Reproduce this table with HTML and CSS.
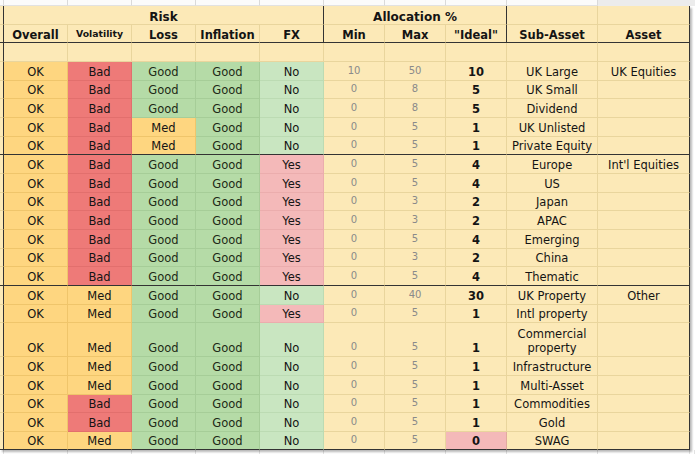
FILE: index.html
```html
<!DOCTYPE html>
<html>
<head>
<meta charset="utf-8">
<link rel="stylesheet" href="styles.css">
</head>
<body>
<div class="top">
  <i></i><i></i><i></i><i></i><i></i><i></i><i></i><i></i><i></i><i></i><i class="shade"></i><i class="shade"></i>
</div>
<div class="tbl">
  <div class="row h1">
    <i class="c0"></i>
    <span class="grp dr">Risk</span>
    <span class="grp3 dr">Allocation %</span>
    <span></span>
    <span></span>
  </div>
  <div class="row h2">
    <i class="c0"></i>
    <span>Overall</span>
    <span class="small">Volatility</span>
    <span>Loss</span>
    <span>Inflation</span>
    <span class="dr">FX</span>
    <span>Min</span>
    <span>Max</span>
    <span class="dr">"Ideal"</span>
    <span>Sub-Asset</span>
    <span>Asset</span>
  </div>
  <div class="row h3">
    <i class="c0"></i><span></span><span></span><span></span><span></span><span></span><span></span><span></span><span></span><span></span><span></span>
  </div>

  <div class="row"><i class="c0"></i><span class="ok">OK</span><span class="bad">Bad</span><span class="good">Good</span><span class="good">Good</span><span class="no">No</span><span class="mn">10</span><span class="mn">50</span><span class="id">10</span><span>UK Large</span><span>UK Equities</span></div>
  <div class="row"><i class="c0"></i><span class="ok">OK</span><span class="bad">Bad</span><span class="good">Good</span><span class="good">Good</span><span class="no">No</span><span class="mn">0</span><span class="mn">8</span><span class="id">5</span><span>UK Small</span><span></span></div>
  <div class="row"><i class="c0"></i><span class="ok">OK</span><span class="bad">Bad</span><span class="good">Good</span><span class="good">Good</span><span class="no">No</span><span class="mn">0</span><span class="mn">8</span><span class="id">5</span><span>Dividend</span><span></span></div>
  <div class="row"><i class="c0"></i><span class="ok">OK</span><span class="bad">Bad</span><span class="med">Med</span><span class="good">Good</span><span class="no">No</span><span class="mn">0</span><span class="mn">5</span><span class="id">1</span><span>UK Unlisted</span><span></span></div>
  <div class="row sep"><i class="c0"></i><span class="ok">OK</span><span class="bad">Bad</span><span class="med">Med</span><span class="good">Good</span><span class="no">No</span><span class="mn">0</span><span class="mn">5</span><span class="id">1</span><span>Private Equity</span><span></span></div>

  <div class="row"><i class="c0"></i><span class="ok">OK</span><span class="bad">Bad</span><span class="good">Good</span><span class="good">Good</span><span class="yes">Yes</span><span class="mn">0</span><span class="mn">5</span><span class="id">4</span><span>Europe</span><span>Int'l Equities</span></div>
  <div class="row"><i class="c0"></i><span class="ok">OK</span><span class="bad">Bad</span><span class="good">Good</span><span class="good">Good</span><span class="yes">Yes</span><span class="mn">0</span><span class="mn">5</span><span class="id">4</span><span>US</span><span></span></div>
  <div class="row"><i class="c0"></i><span class="ok">OK</span><span class="bad">Bad</span><span class="good">Good</span><span class="good">Good</span><span class="yes">Yes</span><span class="mn">0</span><span class="mn">3</span><span class="id">2</span><span>Japan</span><span></span></div>
  <div class="row"><i class="c0"></i><span class="ok">OK</span><span class="bad">Bad</span><span class="good">Good</span><span class="good">Good</span><span class="yes">Yes</span><span class="mn">0</span><span class="mn">3</span><span class="id">2</span><span>APAC</span><span></span></div>
  <div class="row"><i class="c0"></i><span class="ok">OK</span><span class="bad">Bad</span><span class="good">Good</span><span class="good">Good</span><span class="yes">Yes</span><span class="mn">0</span><span class="mn">5</span><span class="id">4</span><span>Emerging</span><span></span></div>
  <div class="row"><i class="c0"></i><span class="ok">OK</span><span class="bad">Bad</span><span class="good">Good</span><span class="good">Good</span><span class="yes">Yes</span><span class="mn">0</span><span class="mn">3</span><span class="id">2</span><span>China</span><span></span></div>
  <div class="row sep"><i class="c0"></i><span class="ok">OK</span><span class="bad">Bad</span><span class="good">Good</span><span class="good">Good</span><span class="yes">Yes</span><span class="mn">0</span><span class="mn">5</span><span class="id">4</span><span>Thematic</span><span></span></div>

  <div class="row"><i class="c0"></i><span class="ok">OK</span><span class="med">Med</span><span class="good">Good</span><span class="good">Good</span><span class="no">No</span><span class="mn">0</span><span class="mn">40</span><span class="id">30</span><span>UK Property</span><span>Other</span></div>
  <div class="row"><i class="c0"></i><span class="ok">OK</span><span class="med">Med</span><span class="good">Good</span><span class="good">Good</span><span class="yes">Yes</span><span class="mn">0</span><span class="mn">5</span><span class="id">1</span><span>Intl property</span><span></span></div>
  <div class="row tall"><i class="c0"></i><span class="ok">OK</span><span class="med">Med</span><span class="good">Good</span><span class="good">Good</span><span class="no">No</span><span class="mn">0</span><span class="mn">5</span><span class="id">1</span><span class="wrap">Commercial<br>property</span><span></span></div>
  <div class="row"><i class="c0"></i><span class="ok">OK</span><span class="med">Med</span><span class="good">Good</span><span class="good">Good</span><span class="no">No</span><span class="mn">0</span><span class="mn">5</span><span class="id">1</span><span>Infrastructure</span><span></span></div>
  <div class="row"><i class="c0"></i><span class="ok">OK</span><span class="med">Med</span><span class="good">Good</span><span class="good">Good</span><span class="no">No</span><span class="mn">0</span><span class="mn">5</span><span class="id">1</span><span>Multi-Asset</span><span></span></div>
  <div class="row"><i class="c0"></i><span class="ok">OK</span><span class="bad">Bad</span><span class="good">Good</span><span class="good">Good</span><span class="no">No</span><span class="mn">0</span><span class="mn">5</span><span class="id">1</span><span>Commodities</span><span></span></div>
  <div class="row"><i class="c0"></i><span class="ok">OK</span><span class="bad">Bad</span><span class="good">Good</span><span class="good">Good</span><span class="no">No</span><span class="mn">0</span><span class="mn">5</span><span class="id">1</span><span>Gold</span><span></span></div>
  <div class="row sep"><i class="c0"></i><span class="ok">OK</span><span class="med">Med</span><span class="good">Good</span><span class="good">Good</span><span class="no">No</span><span class="mn">0</span><span class="mn">5</span><span class="id zero">0</span><span>SWAG</span><span></span></div>
</div>
<div class="below">
  <i></i><i></i><i></i><i></i><i></i><i></i><i></i><i></i><i></i><i></i><i></i><i></i>
</div>
</body>
</html>
```

FILE: styles.css
```css
html, body {
  margin: 0;
  padding: 0;
  background: #ffffff;
  overflow: hidden;
}
body {
  width: 695px;
  height: 454px;
  font-family: "DejaVu Sans", "Liberation Sans", sans-serif;
  font-size: 11.5px;
  color: #141414;
}

/* top strip of the sheet above the table */
.top {
  display: grid;
  grid-template-columns: 4px repeat(5, 64px) repeat(3, 61px) 91px 92px 1fr;
  height: 6px;
}
.top i {
  box-sizing: border-box;
  border-right: 1px solid #dadada;
  border-bottom: 1px solid #e2e2e2;
  background: #fbfbfb;
}
.top i.shade {
  background: #ececec;
  border-right: none;
  border-bottom: none;
}

.tbl {
  width: 690px;
  box-shadow: 2px 2px 2px rgba(0, 0, 0, 0.28);
  position: relative;
}

.row {
  display: grid;
  grid-template-columns: 4px repeat(5, 64px) repeat(3, 61px) 91px 92px;
  height: 18.67px;
}
.row > * {
  box-sizing: border-box;
  border-right: 1px solid rgba(120, 90, 0, 0.14);
  border-bottom: 1px solid rgba(120, 90, 0, 0.14);
  background: #fce9b7;
  display: flex;
  align-items: flex-end;
  justify-content: center;
  padding-bottom: 1px;
  white-space: nowrap;
  line-height: 14px;
}
.row > .c0 {
  border-right: 1px solid #333333;
}
.row > :last-child {
  border-right: 1px solid #333333;
}
.row.sep > * {
  border-bottom: 1px solid #333333;
}

/* header rows */
.h1 {
  height: 19px;
}
.h1 > span {
  font-weight: bold;
  font-size: 12px;
  padding-bottom: 0;
}
.h1 .grp {
  grid-column: span 5;
}
.h1 .grp3 {
  grid-column: span 3;
}
.h2 {
  height: 18px;
}
.h2 > * {
  font-weight: bold;
  border-bottom: 1px solid #333333;
  padding-bottom: 0;
}
.h2 .small {
  font-size: 9.3px;
  padding-bottom: 1px;
}
.row > .dr {
  border-right: 1px solid #333333;
}
.h3 {
  height: 19px;
}

/* cell states */
.row > .ok,
.row > .med {
  background: #fed680;
  border-color: rgba(160, 110, 0, 0.16);
}
.row > .bad {
  background: #ee7a78;
  border-color: rgba(140, 30, 30, 0.12);
}
.row > .good {
  background: #b5dba7;
  color: #1d2a16;
  border-color: rgba(40, 90, 20, 0.1);
}
.row > .no {
  background: #c9e6c1;
  border-color: rgba(40, 90, 20, 0.08);
}
.row > .yes {
  background: #f4b9b9;
  border-color: rgba(140, 40, 40, 0.08);
}
.row > .mn {
  color: #8a8a8a;
  font-size: 10px;
  padding-bottom: 2px;
}
.row > .id {
  font-weight: bold;
}
.row > .zero {
  background: #f4b9b9;
}
.row.sep > * {
  border-bottom-color: #333333;
}

.tall {
  height: 34px;
}
.wrap {
  white-space: normal;
  text-align: center;
}

/* area under the table */
.below {
  display: grid;
  grid-template-columns: 4px repeat(5, 64px) repeat(3, 61px) 91px 92px 1fr;
  height: 10px;
}
.below i {
  box-sizing: border-box;
  border-right: 1px solid #e2e2e2;
}
```
